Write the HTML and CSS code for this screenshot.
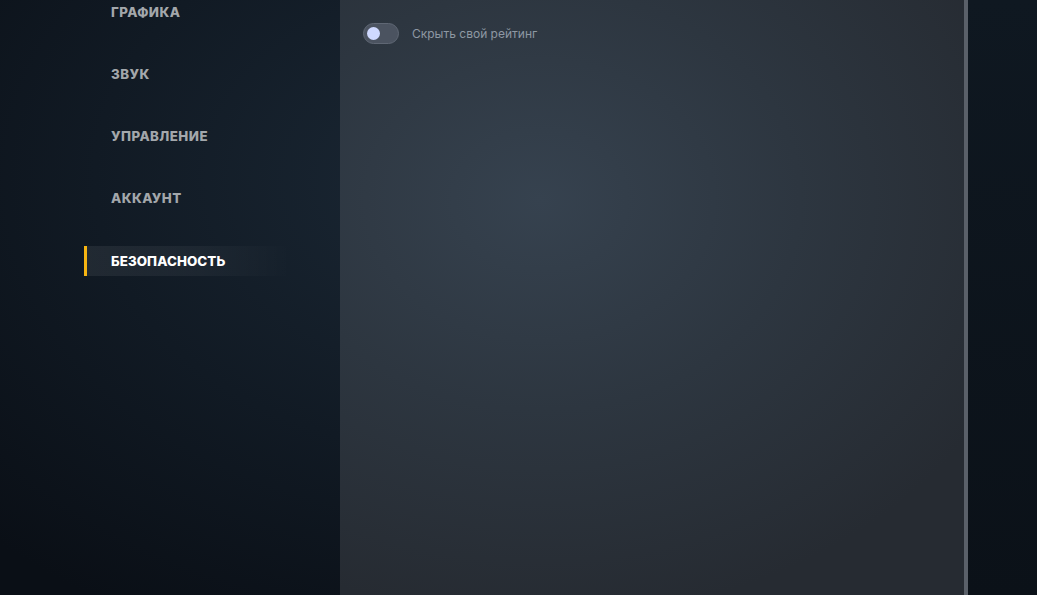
FILE: index.html
```html
<!DOCTYPE html>
<html lang="ru">
<head>
<meta charset="utf-8">
<link rel="stylesheet" href="styles.css">
</head>
<body>
<div class="app">
  <nav class="sidebar">
    <ul class="menu">
      <li class="menu-item">Графика</li>
      <li class="menu-item">Звук</li>
      <li class="menu-item">Управление</li>
      <li class="menu-item">Аккаунт</li>
      <li class="menu-item active">Безопасность</li>
    </ul>
  </nav>
  <main class="panel">
    <label class="option">
      <span class="toggle"><span class="knob"></span></span>
      <span class="option-label">Скрыть свой рейтинг</span>
    </label>
  </main>
  <div class="scrollbar"></div>
  <div class="filler"></div>
</div>
</body>
</html>
```
FILE: styles.css
```css
html, body {
  margin: 0;
  padding: 0;
  height: 100%;
  overflow: hidden;
}
body {
  font-family: Inter, "Noto Sans", sans-serif;
  background: radial-gradient(ellipse 700px 500px at 480px 180px, #1b2835 0%, #111a24 55%, #0a0f16 100%);
  color: #9aa1a9;
}
.app {
  display: flex;
  height: 595px;
}
.sidebar {
  width: 340px;
  flex: none;
}
.menu {
  list-style: none;
  margin: -3px 0 0 84px;
  padding: 0;
  display: flex;
  flex-direction: column;
  gap: 32px;
}
.menu-item {
  height: 30px;
  display: flex;
  align-items: center;
  padding-left: 27px;
  font-size: 13.3px;
  font-weight: 800;
  text-transform: uppercase;
  color: #a3a7ab;
  letter-spacing: 0.45px;
}
.menu-item.active {
  margin-top: 1px;
  color: #ffffff;
  padding-left: 24px;
  border-left: 3px solid #f7b512;
  background: linear-gradient(90deg, rgba(255,255,255,0.07) 0%, rgba(255,255,255,0.045) 55%, rgba(255,255,255,0) 100%);
  width: 180px;
  letter-spacing: 0.1px;
}
.panel {
  width: 624px;
  flex: none;
  background: radial-gradient(ellipse 520px 420px at 200px 200px, #36424f 0%, #2d3640 50%, #262b32 100%);
  padding: 23px 0 0 23px;
  box-sizing: border-box;
}
.option {
  display: flex;
  align-items: center;
  gap: 13px;
}
.toggle {
  width: 36px;
  height: 21px;
  box-sizing: border-box;
  border-radius: 11px;
  background: #4b5360;
  border: 1px solid #5f6774;
  display: flex;
  align-items: center;
  padding-left: 3px;
}
.knob {
  width: 13px;
  height: 13px;
  border-radius: 50%;
  background: #cfd9ff;
}
.option-label {
  font-size: 12px;
  color: #8e98a3;
}
.scrollbar {
  width: 4px;
  flex: none;
  background: #5a6069;
}
.filler {
  flex: 1;
  background: linear-gradient(180deg, #0f1821 0%, #0b1118 100%);
}
```
